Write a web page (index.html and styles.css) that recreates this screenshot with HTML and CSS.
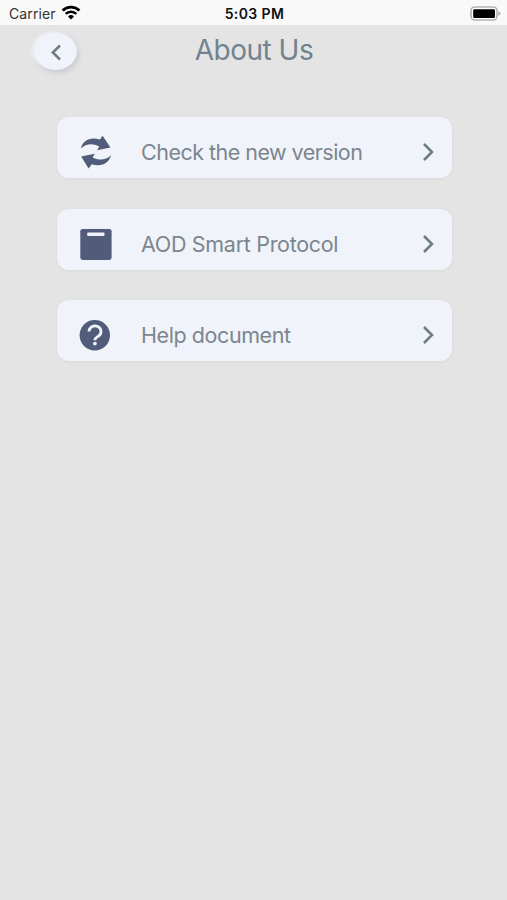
FILE: index.html
```html
<!DOCTYPE html>
<html lang="en">
<head>
  <meta charset="UTF-8" />
  <meta name="viewport" content="width=device-width, initial-scale=1.0" />
  <title>About Us</title>
  <link rel="stylesheet" href="styles.css">
</head>
<body>
  <div class="status-bar">
    <div class="carrier">
      <span class="carrier-name">Carrier</span>
      <svg class="wifi" width="20" height="15" viewBox="0 0 20 15">
        <path d="M1.6 5.6a12 12 0 0 1 16.8 0" fill="none" stroke="#000" stroke-width="2.8" />
        <path d="M4.7 8.9a7.6 7.6 0 0 1 10.6 0" fill="none" stroke="#000" stroke-width="2.5" />
        <path d="M7 11.4a4.3 4.3 0 0 1 6 0L10 14.4z" fill="#000" />
      </svg>
    </div>
    <span class="time">5:03 PM</span>
    <svg class="battery" width="31" height="15" viewBox="0 0 31 15">
      <rect x="1" y="1" width="26" height="13" rx="3.8" fill="#fff" stroke="#b2b2b2" stroke-width="1.6" />
      <rect x="3.2" y="3.2" width="21.8" height="8.8" rx="1.2" fill="#000" />
      <path d="M28.4 5.2q2 .8 2 2.3t-2 2.3z" fill="#a8a8a8" />
    </svg>
  </div>

  <header class="header">
    <button class="back" aria-label="Back">
      <svg width="12" height="18" viewBox="0 0 12 18">
        <path d="M10 2.500L2.800 9.500l7.200 7" />
      </svg>
    </button>
    <h1>About Us</h1>
  </header>

  <main class="menu">
    <a class="item" href="#">
      <svg class="icon" width="34" height="34" viewBox="0 0 34 34">
        <path d="M1.800 13.500C4 5.500 11 1.500 21 4.600L23.600.8l7.800 11.800-13.200 2.600 2-3.800C13.500 8 7 8.500 1.800 13.500z" />
        <path d="M32 20.200C29.800 28.200 22.800 32.200 12.800 29.300L9.600 33.400 2.200 21.400l13.500-2.600-2 3.600C20.300 25.700 26.800 25.200 32 20.200z" />
      </svg>
      <span class="label check">Check the new version</span>
      <svg class="chevron" width="14" height="20" viewBox="0 0 14 20">
        <path d="M3 2l8 8-8 8" />
      </svg>
    </a>
    <a class="item" href="#">
      <svg class="icon" width="34" height="34" viewBox="0 0 34 34">
        <rect x="1.3" y="1.900" width="31.300" height="31" rx="2.400" />
        <rect x="8.200" y="5.500" width="17.300" height="3.400" rx=".9" fill="#f0f3f9" />
      </svg>
      <span class="label protocol">AOD Smart Protocol</span>
      <svg class="chevron" width="14" height="20" viewBox="0 0 14 20">
        <path d="M3 2l8 8-8 8" />
      </svg>
    </a>
    <a class="item" href="#">
      <svg class="icon" width="34" height="34" viewBox="0 0 34 34">
        <circle cx="15.800" cy="17.200" r="15.200" />
        <path d="M10 13.500a6 5.600 0 1 1 9.600 4.500c-2.100 1.400-3.700 1.900-3.700 4.200" fill="none" stroke="#f0f3f9" stroke-width="2.800" />
        <circle cx="15.900" cy="25.600" r="1.900" fill="#f0f3f9" />
      </svg>
      <span class="label help">Help document</span>
      <svg class="chevron" width="14" height="20" viewBox="0 0 14 20">
        <path d="M3 2l8 8-8 8" />
      </svg>
    </a>
  </main>
</body>
</html>
```

FILE: styles.css
```css
* {
  box-sizing: border-box;
}
body {
  font-family: Inter, Roboto, sans-serif;
  background: #e4e4e4;
  margin: 0;
  min-height: 100vh;
}
.status-bar {
  display: grid;
  grid-template-columns: 1fr auto 1fr;
  align-items: center;
  height: 25px;
  padding: 2px 7px 0 9px;
  background: #f9f9f9;
  color: #111;
  font-size: 14px;
}
.carrier {
  display: flex;
  align-items: center;
  gap: 5px;
}
.carrier-name {
  color: #333;
  letter-spacing: 0.1px;
}
.wifi {
  margin-top: -3px;
}
.time {
  font-weight: 600;
  letter-spacing: 0.4px;
}
.battery {
  justify-self: end;
  margin: -1px -1px 0 0;
}
.header {
  display: grid;
  grid-template-columns: 1fr auto 1fr;
  height: 92px;
  padding: 8px 33px 0 34px;
}
.back {
  display: flex;
  align-items: center;
  justify-content: center;
  width: 43px;
  height: 37px;
  padding: 0 0 0 1px;
  border: none;
  border-radius: 50%;
  background: #f0f3f9;
  box-shadow: 2px 3px 5px rgba(160, 168, 178, 0.4), -2px -1px 3px rgba(243, 245, 248, 0.9);
  cursor: pointer;
}
.back path {
  fill: none;
  stroke: #707c84;
  stroke-width: 2.5;
}
h1 {
  margin: 0;
  color: #72828f;
  font-size: 28px;
  font-weight: 400;
  line-height: 34px;
  letter-spacing: -0.5px;
}
.menu {
  display: flex;
  flex-direction: column;
  gap: 30.5px;
  padding: 0 55px 0 57px;
}
.item {
  display: flex;
  align-items: center;
  height: 61px;
  padding: 9px 17px 0 22px;
  border-radius: 12px;
  background: #f0f3f9;
  box-shadow: 0 1px 3px rgba(190, 195, 200, 0.3);
  text-decoration: none;
}
.icon {
  margin-right: 28px;
  fill: #505c7a;
}
.label {
  flex: 1;
  color: #7c868f;
  font-size: 21.5px;
  white-space: nowrap;
}
.check {
  letter-spacing: -0.52px;
}
.protocol {
  letter-spacing: -0.31px;
}
.help {
  letter-spacing: -0.42px;
}
.chevron path {
  fill: none;
  stroke: #6e7b80;
  stroke-width: 2.5;
}
```
